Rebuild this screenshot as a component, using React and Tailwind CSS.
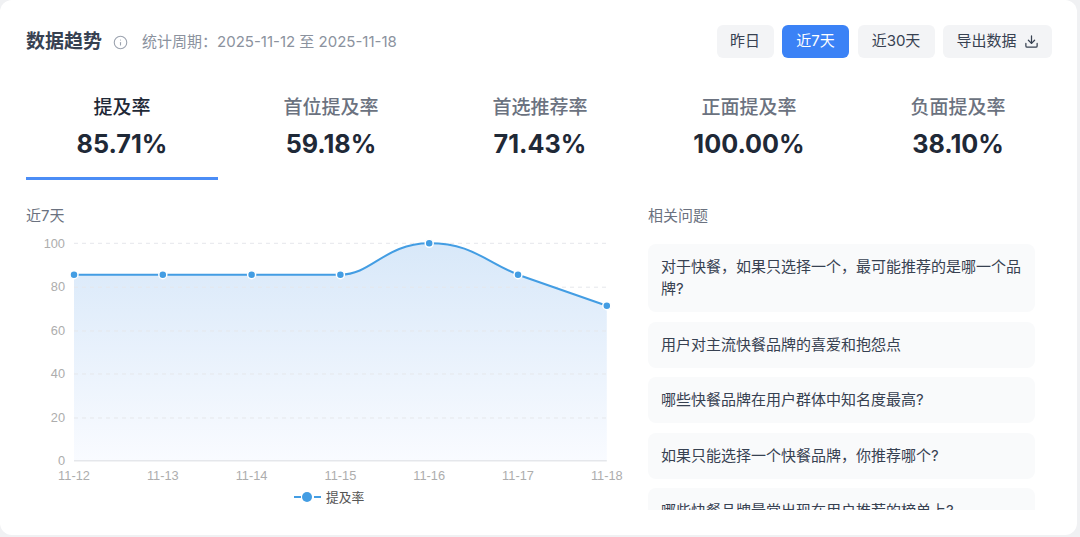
import React from 'react';
import { Info, Download } from 'lucide-react';

const tabs = [
  { label: '提及率', value: '85.71%', active: true },
  { label: '首位提及率', value: '59.18%' },
  { label: '首选推荐率', value: '71.43%' },
  { label: '正面提及率', value: '100.00%' },
  { label: '负面提及率', value: '38.10%' },
];

const questions = [
  '对于快餐\uFF0C如果只选择一个\uFF0C最可能推荐的是哪一个品牌?',
  '用户对主流快餐品牌的喜爱和抱怨点',
  '哪些快餐品牌在用户群体中知名度最高?',
  '如果只能选择一个快餐品牌\uFF0C你推荐哪个?',
  '哪些快餐品牌最常出现在用户推荐的榜单上?',
];

const xs = [74, 162.8, 251.6, 340.4, 429.2, 518, 606.8];
const ys = [274.7, 274.7, 274.7, 274.7, 243.3, 274.7, 305.7];
const days = ['11-12', '11-13', '11-14', '11-15', '11-16', '11-17', '11-18'];
const ticks = [
  { label: '100', y: 243.3, textY: 248 },
  { label: '80', y: 287.2, textY: 290.8 },
  { label: '60', y: 331, textY: 334.6 },
  { label: '40', y: 374, textY: 377.6 },
  { label: '20', y: 418, textY: 421.6 },
];

const linePath =
  'M74 274.7 L340.4 274.7 C372 274.7 385 243.3 429.2 243.3 C472 243.3 484 261 518 274.7 L606.8 305.7';

const TrendChart = () => (
  <svg viewBox="26 230 604 280" className="block h-[280px] w-[604px]">
    <defs>
      <linearGradient id="area" x1="0" y1="0" x2="0" y2="1">
        <stop offset="0%" stopColor="#d8e8f9" />
        <stop offset="100%" stopColor="#f9fbff" />
      </linearGradient>
    </defs>
    <path d={`${linePath} L606.8 460.7 L74 460.7 Z`} fill="url(#area)" />
    {ticks.map((t) => (
      <g key={t.label}>
        <line x1="74" x2="606.8" y1={t.y} y2={t.y} stroke="#e5e7eb" strokeDasharray="4 4" />
        <text x="65" y={t.textY} textAnchor="end" fontSize="12.8" fill="#adadad" fontFamily="Liberation Sans, sans-serif">
          {t.label}
        </text>
      </g>
    ))}
    <text x="65" y="465" textAnchor="end" fontSize="12.8" fill="#adadad" fontFamily="Liberation Sans, sans-serif">0</text>
    <line x1="74" x2="606.8" y1="460.7" y2="460.7" stroke="#e5e7eb" strokeWidth="1.5" />
    {days.map((d, i) => (
      <text key={d} x={xs[i]} y="479.5" textAnchor="middle" fontSize="12.8" fill="#adadad" fontFamily="Liberation Sans, sans-serif">
        {d}
      </text>
    ))}
    <path d={linePath} fill="none" stroke="#439de3" strokeWidth="2" />
    {xs.map((x, i) => (
      <circle key={x} cx={x} cy={ys[i]} r="4" fill="#439de3" stroke="#ffffff" strokeWidth="1.5" />
    ))}
    {/* legend */}
    <line x1="294" x2="301" y1="497" y2="497" stroke="#439de3" strokeWidth="2" />
    <line x1="314" x2="321" y1="497" y2="497" stroke="#439de3" strokeWidth="2" />
    <circle cx="307" cy="497" r="5" fill="#439de3" />
    <text x="326" y="501.5" fontSize="12.8" fill="#555555" fontFamily="Noto Sans CJK SC, sans-serif">提及率</text>
  </svg>
);

const App = () => {
  return (
    <div className="h-[537px] w-[1080px] overflow-hidden bg-[#f0f1f3] font-['Inter','Noto_Sans_CJK_SC',sans-serif]">
      <div className="h-[535px] w-[1077px] rounded-xl bg-white pl-[26px] pt-[25px]">
        {/* Header */}
        <div className="flex h-[33px] w-[1026px] items-center justify-between">
          <div className="flex items-center pt-px">
            <h2 className="text-[19px] font-bold text-[#374151]">数据趋势</h2>
            <Info className="ml-[11px] h-[15px] w-[15px] text-[#9ca3af]" strokeWidth={1.75} />
            <span className="ml-[14px] text-[15px] text-[#8b929e]">{'统计周期\uFF1A2025-11-12 至 2025-11-18'}</span>
          </div>
          <div className="flex items-center gap-[8.5px] text-[15px] text-[#374151]">
            <button className="h-[33px] w-[57px] rounded-md bg-[#f3f4f6]">昨日</button>
            <button className="h-[33px] w-[67px] rounded-md bg-[#3b82f6] text-white">近7天</button>
            <button className="h-[33px] w-[77px] rounded-md bg-[#f3f4f6]">近30天</button>
            <button className="flex h-[33px] w-[109px] items-center justify-center gap-[7px] rounded-md bg-[#f3f4f6]">
              导出数据
              <Download className="h-[15px] w-[15px]" strokeWidth={2} />
            </button>
          </div>
        </div>

        {/* Metric tabs */}
        <div className="mt-[22px] grid w-[1028px] grid-cols-5 gap-[17px]">
          {tabs.map((tab) => (
            <div
              key={tab.label}
              className={`h-[100px] pt-[14px] text-center ${tab.active ? 'border-b-[3px] border-[#4b8df6]' : ''}`}
            >
              <div className={`text-[19px] font-medium leading-7 ${tab.active ? 'text-[#1f2937]' : 'text-[#6b7280]'}`}>
                {tab.label}
              </div>
              <div className="mt-[4px] text-[25.2px] font-bold leading-9 text-[#1f2937]">{tab.value}</div>
            </div>
          ))}
        </div>

        {/* Chart and related questions */}
        <div className="mt-[26px] flex gap-[18px]">
          <div>
            <div className="mb-[4px] text-[15px] leading-5 text-[#6b7280]">近7天</div>
            <TrendChart />
          </div>
          <div className="w-[387px]">
            <div className="text-[15px] leading-5 text-[#6b7280]">相关问题</div>
            <div className="mt-[18px] flex h-[266px] flex-col gap-[9.6px] overflow-hidden">
              {questions.map((q) => (
                <div key={q} className="shrink-0 rounded-lg bg-[#f9fafb] px-[13px] py-[12px] text-[15px] leading-[22px] text-[#374151]">
                  {q}
                </div>
              ))}
            </div>
          </div>
        </div>
      </div>
    </div>
  );
};

export default App;
